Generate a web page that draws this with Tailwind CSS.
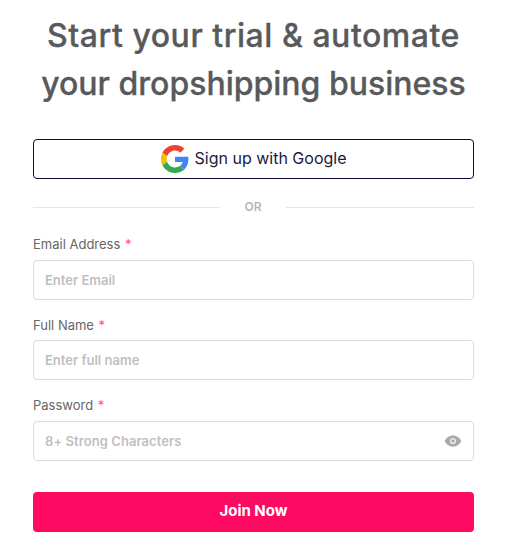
<!DOCTYPE html>
<html><head><script src="https://cdn.jsdelivr.net/npm/@tailwindcss/browser@4"></script></head>
<body class="bg-white">
<div class="w-[505px] h-[547px] overflow-hidden pl-[33px] pr-[31px] pt-[12px] font-['Inter',sans-serif]">
<h1 class="text-center text-[32px] leading-[48px] font-medium text-[#58595b] -mx-4 [-webkit-text-stroke:0.3px_#58595b]"><span class="tracking-[0.52px]">Start your trial &amp; automate</span><br>your dropshipping business</h1>
<button class="mt-[31px] w-full h-[40px] border border-[#0b0b3b] rounded flex items-center justify-center gap-[6px] text-[16px] text-[#1a1a40]">
<svg width="28" height="28" viewBox="0 0 48 48"><path fill="#EA4335" d="M24 9.5c3.54 0 6.71 1.22 9.21 3.6l6.85-6.85C35.9 2.38 30.47 0 24 0 14.62 0 6.51 5.38 2.56 13.22l7.98 6.19C12.43 13.72 17.74 9.5 24 9.5z"/><path fill="#4285F4" d="M46.98 24.55c0-1.57-.15-3.09-.38-4.55H24v9.02h12.94c-.58 2.96-2.26 5.48-4.78 7.18l7.73 6c4.51-4.18 7.09-10.36 7.09-17.65z"/><path fill="#FBBC05" d="M10.53 28.59c-.48-1.45-.76-2.99-.76-4.59s.27-3.14.76-4.59l-7.98-6.19C.92 16.46 0 20.12 0 24c0 3.88.92 7.54 2.56 10.78l7.97-6.19z"/><path fill="#34A853" d="M24 48c6.48 0 11.93-2.13 15.89-5.81l-7.73-6c-2.15 1.45-4.92 2.3-8.16 2.3-6.26 0-11.57-4.22-13.47-9.91l-7.98 6.19C6.51 42.62 14.62 48 24 48z"/></svg>
<span class="-mt-[2px]">Sign up with Google</span></button>
<div class="mt-[20px] flex items-center h-[16px]"><div class="h-px bg-[#e5e5e5] w-[187px]"></div><span class="w-[66px] text-center text-[12px] font-semibold text-[#b5b5b5]">OR</span><div class="h-px bg-[#e5e5e5] flex-1"></div></div>
<label class="block mt-[20px] text-[13px] leading-[18px] text-[#666666]">Email Address <span class="text-[#ff4d85] ml-[1px]">*</span></label>
<div class="mt-[7px] h-[40px] border border-[#dcdcdc] rounded flex items-center pt-[1px] px-[11px] text-[13px] font-semibold text-[#bfbfbf]">Enter Email</div>
<label class="block mt-[16px] text-[13px] leading-[18px] text-[#666666]">Full Name <span class="text-[#ff4d85] ml-[1px]">*</span></label>
<div class="mt-[6px] h-[40px] border border-[#dcdcdc] rounded flex items-center pt-[1px] px-[11px] text-[13px] font-semibold text-[#bfbfbf]">Enter full name</div>
<label class="block mt-[16px] text-[13px] leading-[18px] text-[#666666]">Password <span class="text-[#ff4d85] ml-[1px]">*</span></label>
<div class="mt-[7px] h-[40px] border border-[#dcdcdc] rounded flex items-center justify-between pl-[11px] pr-[11px] text-[13px] font-semibold text-[#bfbfbf]"><span class="pt-[1px] tracking-[0.07px]">8+ Strong Characters</span>
<svg width="18" height="18" viewBox="0 0 24 24" fill="#aaaaaa"><path fill-rule="evenodd" d="M12 4.5C7 4.5 2.73 7.61 1 12c1.73 4.39 6 7.5 11 7.5s9.27-3.11 11-7.5c-1.73-4.39-6-7.5-11-7.5zM12 8.2a3.8 3.8 0 1 1 0 7.6 3.8 3.8 0 0 1 0-7.6z"/><circle cx="12" cy="12" r="2.4"/></svg></div>
<button class="mt-[31px] w-full h-[40px] rounded bg-[#ff0a62] text-white text-[15px] font-bold"><span class="relative -top-px">Join Now</span></button>
</div>
</body></html>
